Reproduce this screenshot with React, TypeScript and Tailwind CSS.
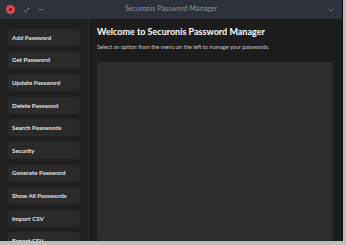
import React from "react";

const items = [
  "Add Password",
  "Get Password",
  "Update Password",
  "Delete Password",
  "Search Passwords",
  "Security",
  "Generate Password",
  "Show All Passwords",
  "Import CSV",
  "Export CSV",
];

export default function App() {
  return (
    <div className="w-[346px] h-[245px] bg-[#bdbdbd] overflow-hidden" style={{ fontFamily: "Lato, 'Open Sans', sans-serif" }}>
      <div className="w-[343px] h-[241px] flex flex-col bg-[#1c1c1c] border-r border-[#0a0a0a] overflow-hidden">
        <div className="h-[19px] shrink-0 bg-[#2d313b] flex items-center px-[6px] relative">
          <div className="w-[9px] h-[9px] rounded-full bg-[#e0464c] flex items-center justify-center">
            <div className="w-[3px] h-[3px] bg-[#7a1a1e] rounded-[1px]" />
          </div>
          <svg width="6" height="6" viewBox="0 0 6 6" className="ml-[9px]">
            <path d="M1 5 L5 1 M3 1 H5 V3 M1 3 V5 H3" stroke="#6b707a" strokeWidth="0.9" fill="none" />
          </svg>
          <div className="ml-[8px] w-[5px] h-[1px] bg-[#6b707a]" />
          <div className="absolute left-0 right-0 top-0 h-[19px] flex items-center justify-center text-[7.2px] text-[#8c929c] pointer-events-none">
            Securonis Password Manager
          </div>
          <svg width="6" height="4" viewBox="0 0 6 4" className="ml-auto mr-[2px]">
            <path d="M0.5 0.5 L3 3 L5.5 0.5" stroke="#6b707a" strokeWidth="1" fill="none" />
          </svg>
        </div>
        <div className="flex flex-1 min-h-0">
          <div className="w-[89px] shrink-0 bg-[#1f1f1f] border-r border-[#2c2c2c] pt-[10px] px-[8px] flex flex-col gap-[5.6px]">
            {items.map((t) => (
              <div key={t} className="h-[17px] shrink-0 rounded-[3px] bg-[#2a2a2a] flex items-center pl-[4px] text-[6.2px] font-bold text-[#e6e6e6]">
                {t}
              </div>
            ))}
          </div>
          <div className="flex-1 flex flex-col pl-[8px] pr-[9px] pt-[6px]">
            <div className="text-[9px] font-bold text-white leading-[14px]">
              Welcome to Securonis Password Manager
            </div>
            <div className="mt-[4px] text-[5.6px] text-[#c8c8c8] leading-[8px]">
              Select an option from the menu on the left to manage your passwords.
            </div>
            <div className="mt-[11px] flex-1 rounded-[3px] bg-[#2d2d2d]" />
          </div>
        </div>
      </div>
    </div>
  );
}
